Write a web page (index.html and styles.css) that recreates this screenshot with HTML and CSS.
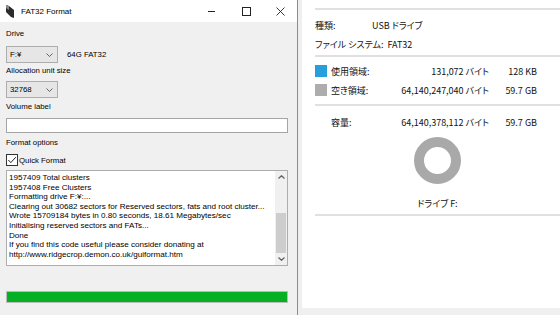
FILE: index.html
```html
<!DOCTYPE html>
<html lang="ja">
<head>
    <meta charset="UTF-8">
    <title>FAT32 Format</title>
    <link rel="stylesheet" href="styles.css">
</head>
<body>
    <div class = 'desk'>
        <div class = 'fmt'>
            <div class = 'titlebar'>
                <svg class = 'app_icon' viewBox = '0 0 10 13'>
                    <polygon points = '1,0 4,1 9,5 9,13 6,12 1,7' fill = '#2b2b2b'/>
                    <polygon points = '1,0 4,1 4,5 1,3' fill = '#8a8a8a'/>
                </svg>
                <span class = 'title'>FAT32 Format</span>
                <div class = 'win_btns'>
                    <div class = 'win_btn'>
                        <svg width = '8' height = '8' viewBox = '0 0 8 8'><line x1 = '0' y1 = '4.5' x2 = '7' y2 = '4.5' stroke = '#222' stroke-width = '1'/></svg>
                    </div>
                    <div class = 'win_btn'>
                        <svg width = '9' height = '9' viewBox = '0 0 9 9'><rect x = '0.5' y = '0.5' width = '8' height = '8' fill = 'none' stroke = '#222' stroke-width = '1'/></svg>
                    </div>
                    <div class = 'win_btn'>
                        <svg width = '9' height = '9' viewBox = '0 0 9 9'><path d = 'M0.5 0.5 L8.5 8.5 M8.5 0.5 L0.5 8.5' stroke = '#222' stroke-width = '0.9'/></svg>
                    </div>
                </div>
            </div>

            <div class = 'fmt_body'>
                <div class = 'lbl'>Drive</div>
                <div class = 'drive_row'>
                    <div class = 'combo'>
                        <span>F:¥</span>
                        <svg class = 'chev' viewBox = '0 0 7 4'><polyline points = '0.5,0.5 3.5,3.5 6.5,0.5' fill = 'none' stroke = '#555' stroke-width = '0.9'/></svg>
                    </div>
                    <span class = 'drive_info'>64G FAT32</span>
                </div>

                <div class = 'lbl lbl_alloc'>Allocation unit size</div>
                <div class = 'combo combo_alloc'>
                    <span>32768</span>
                    <svg class = 'chev' viewBox = '0 0 7 4'><polyline points = '0.5,0.5 3.5,3.5 6.5,0.5' fill = 'none' stroke = '#555' stroke-width = '0.9'/></svg>
                </div>

                <div class = 'lbl lbl_volume'>Volume label</div>
                <div class = 'text_box'></div>

                <div class = 'lbl lbl_options'>Format options</div>
                <div class = 'check_row'>
                    <svg class = 'check_box' viewBox = '0 0 12 12'>
                        <rect x = '0.5' y = '0.5' width = '11' height = '11' fill = '#fff' stroke = '#333'/>
                        <polyline points = '2.3,6 4.8,8.6 9.8,3.2' fill = 'none' stroke = '#222' stroke-width = '1'/>
                    </svg>
                    <span>Quick Format</span>
                </div>

                <div class = 'log'>
                    <div class = 'log_text'>
                        <div>1957409 Total clusters</div>
                        <div>1957408 Free Clusters</div>
                        <div>Formatting drive F:¥:...</div>
                        <div>Clearing out 30682 sectors for Reserved sectors, fats and root cluster...</div>
                        <div>Wrote 15709184 bytes in 0.80 seconds, 18.61 Megabytes/sec</div>
                        <div>Initialising reserved sectors and FATs...</div>
                        <div>Done</div>
                        <div>If you find this code useful please consider donating at</div>
                        <div>http://www.ridgecrop.demon.co.uk/guiformat.htm</div>
                    </div>
                    <div class = 'scroll'>
                        <div class = 'scroll_arrow'>
                            <svg width = '7' height = '4' viewBox = '0 0 7 4'><polyline points = '0.5,3.5 3.5,0.7 6.5,3.5' fill = 'none' stroke = '#606060' stroke-width = '1.2'/></svg>
                        </div>
                        <div class = 'scroll_track'>
                            <div class = 'scroll_thumb'></div>
                        </div>
                        <div class = 'scroll_arrow'>
                            <svg width = '7' height = '4' viewBox = '0 0 7 4'><polyline points = '0.5,0.5 3.5,3.3 6.5,0.5' fill = 'none' stroke = '#606060' stroke-width = '1.2'/></svg>
                        </div>
                    </div>
                </div>

                <div class = 'progress'><div class = 'progress_fill'></div></div>
            </div>
        </div>

        <div class = 'props'>
            <div class = 'props_main'>
                <div class = 'rule rule_top'></div>

                <div class = 'info_row info_first'>
                    <span class = 'info_label'>種類:</span>
                    <span>USB ドライブ</span>
                </div>
                <div class = 'info_row info_second'>
                    <span>ファイル システム:</span>
                    <span class = 'fs_value'>FAT32</span>
                </div>

                <div class = 'rule rule_mid'></div>

                <div class = 'usage_row usage_first'>
                    <span class = 'swatch swatch_used'></span>
                    <span>使用領域:</span>
                    <span class = 'num'>131,072 バイト</span>
                    <span class = 'num'>128 KB</span>
                </div>
                <div class = 'usage_row usage_second'>
                    <span class = 'swatch swatch_free'></span>
                    <span>空き領域:</span>
                    <span class = 'num'>64,140,247,040 バイト</span>
                    <span class = 'num'>59.7 GB</span>
                </div>

                <div class = 'rule rule_usage'></div>

                <div class = 'usage_row capacity_row'>
                    <span></span>
                    <span>容量:</span>
                    <span class = 'num'>64,140,378,112 バイト</span>
                    <span class = 'num'>59.7 GB</span>
                </div>

                <div class = 'donut'>
                    <svg width = '47' height = '47' viewBox = '0 0 47 47'>
                        <circle cx = '23.5' cy = '23.5' r = '18.5' fill = 'none' stroke = '#a9a9a9' stroke-width = '10'/>
                    </svg>
                </div>

                <div class = 'drive_name'>ドライブ F:</div>

                <div class = 'rule rule_bottom'></div>
            </div>
            <div class = 'props_foot'></div>
        </div>
    </div>
</body>
</html>
```

FILE: styles.css
```css
body{
    margin: 0;
    width: 560px;
    height: 315px;
    overflow: hidden;
    background-color: #fff;
    font-family: "Liberation Sans", Arial, sans-serif;
    color: #000;
}

.desk{
    display: flex;
    height: 315px;
}

/* format tool window */

.fmt{
    width: 297px;
    flex-shrink: 0;
    border-right: 1px solid #8c8c8c;
    background-color: #f0f0f0;
}

.titlebar{
    height: 22px;
    background-color: #fff;
    display: flex;
    align-items: center;
}

.app_icon{
    width: 10px;
    height: 13px;
    margin-left: 5px;
}

.title{
    margin-left: 6px;
    font-size: 8px;
}

.win_btns{
    margin-left: auto;
    display: flex;
}

.win_btn{
    width: 34px;
    height: 22px;
    display: flex;
    align-items: center;
    justify-content: center;
}

.fmt_body{
    display: flex;
    flex-direction: column;
    padding: 7px 9px 0 6px;
    font-size: 7.8px;
}

.lbl{
    height: 10px;
    line-height: 10px;
}

.lbl_alloc{ margin-top: 3px; }
.lbl_volume{ margin-top: 4px; }
.lbl_options{ margin-top: 5px; }

.drive_row{
    display: flex;
    align-items: center;
    margin-top: 7px;
}

.combo{
    width: 52px;
    height: 17px;
    box-sizing: border-box;
    border: 1px solid #adadad;
    background-color: #e6e6e6;
    display: flex;
    align-items: center;
    padding: 0 4px 0 3px;
}

.combo_alloc{ margin-top: 5px; }

.chev{
    width: 7px;
    height: 4px;
    margin-left: auto;
}

.drive_info{
    margin-left: 9px;
}

.text_box{
    margin-top: 6px;
    height: 15px;
    box-sizing: border-box;
    border: 1px solid #a5a5a5;
    background-color: #fff;
}

.check_row{
    display: flex;
    align-items: center;
    height: 12px;
    margin-top: 6px;
}

.check_box{
    width: 12px;
    height: 12px;
    margin-right: 1px;
}

.log{
    display: flex;
    margin-top: 4px;
    height: 96px;
    box-sizing: border-box;
    border: 1px solid #adadad;
    background-color: #fff;
}

.log_text{
    flex: 1;
    padding: 2px 0 0 2px;
    font-size: 8.1px;
    line-height: 9.6px;
    white-space: nowrap;
    overflow: hidden;
}

.scroll{
    width: 12px;
    display: flex;
    flex-direction: column;
    background-color: #f0f0f0;
}

.scroll_arrow{
    height: 12px;
    display: flex;
    align-items: center;
    justify-content: center;
}

.scroll_track{
    flex: 1;
    display: flex;
    flex-direction: column;
    justify-content: flex-end;
}

.scroll_thumb{
    height: 40px;
    margin: 0 1px;
    background-color: #cdcdcd;
}

.progress{
    margin-top: 25px;
    height: 12px;
    box-sizing: border-box;
    border: 1px solid #bcbcbc;
    background-color: #e6e6e6;
}

.progress_fill{
    height: 100%;
    background-color: #06b025;
}

/* drive properties window */

.props{
    flex: 1;
    display: flex;
    flex-direction: column;
    border-left: 4px solid #efefef;
    background-color: #fff;
    font-family: "Noto Sans CJK JP", "Noto Sans", sans-serif;
    font-size: 9px;
    font-feature-settings: "palt";
    color: #111;
}

.props_main{
    flex: 1;
    padding-left: 13px;
}

.props_foot{
    height: 7px;
    background-color: #f0f0f0;
}

.rule{
    height: 2px;
    background-color: #e0e0e0;
}

.rule_top{ margin-top: 8px; }
.rule_mid{ margin-top: 2px; }
.rule_usage{ margin-top: 5px; }
.rule_bottom{ margin-top: 1px; }

.info_row{
    display: flex;
    align-items: center;
    height: 18px;
}

.info_first{ margin-top: 6px; }
.info_second{ margin-top: 1px; }

.info_label{
    width: 57px;
}

.fs_value{
    margin-left: 4px;
}

.usage_row{
    display: grid;
    grid-template-columns: 16px 66px 92px 48px;
    align-items: center;
    height: 18px;
}

.usage_first{ margin-top: 5px; }
.usage_second{ margin-top: 1px; }
.capacity_row{ margin-top: 7px; }

.swatch{
    width: 12px;
    height: 12px;
}

.swatch_used{ background-color: #26a0da; }
.swatch_free{ background-color: #adadad; }

.num{
    text-align: right;
}

.donut{
    display: flex;
    justify-content: center;
    margin-top: 6px;
    height: 47px;
}

.drive_name{
    margin-top: 11px;
    height: 18px;
    line-height: 18px;
    text-align: center;
}
```
